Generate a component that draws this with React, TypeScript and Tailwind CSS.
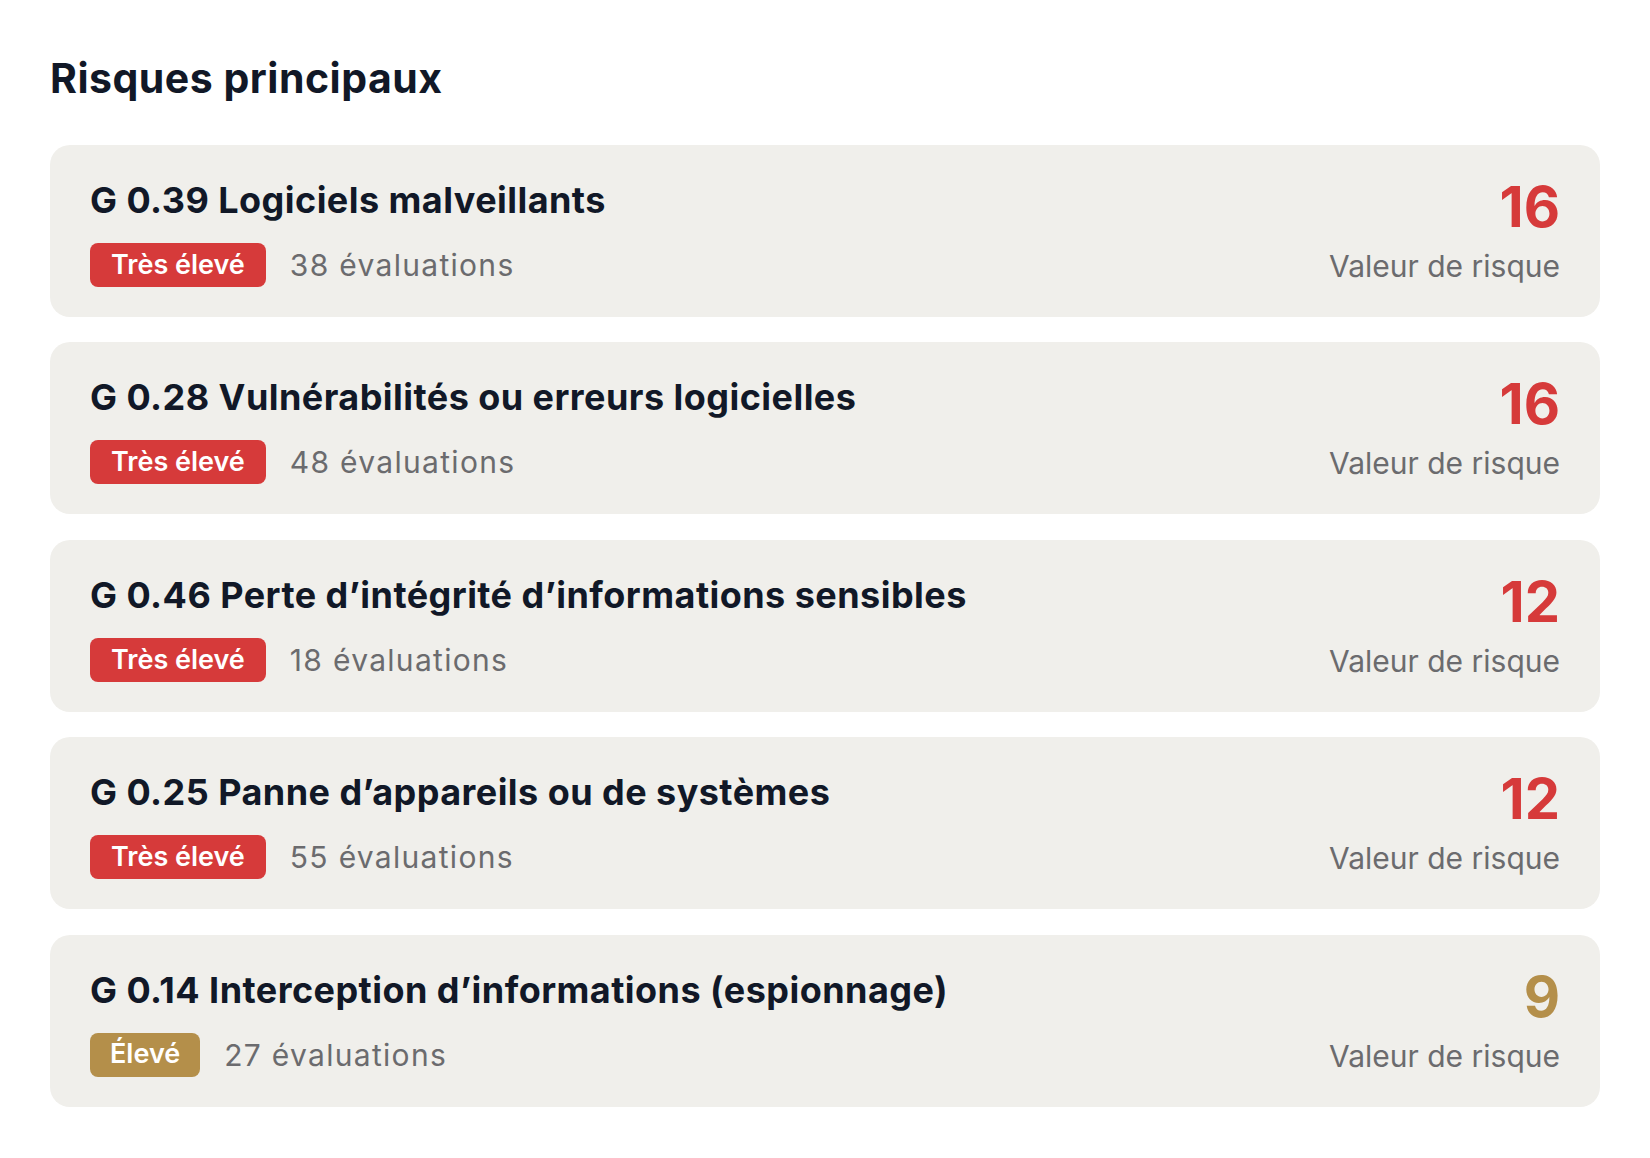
const risks = [
  { code: "G 0.39", name: "Logiciels malveillants", level: "Très élevé", count: 38, value: 16, tone: "red" },
  { code: "G 0.28", name: "Vulnérabilités ou erreurs logicielles", level: "Très élevé", count: 48, value: 16, tone: "red" },
  { code: "G 0.46", name: "Perte d’intégrité d’informations sensibles", level: "Très élevé", count: 18, value: 12, tone: "red" },
  { code: "G 0.25", name: "Panne d’appareils ou de systèmes", level: "Très élevé", count: 55, value: 12, tone: "red" },
  { code: "G 0.14", name: "Interception d’informations (espionnage)", level: "Élevé", count: 27, value: 9, tone: "gold" },
];

type Risk = (typeof risks)[number];

function RiskCard({ risk }: { risk: Risk }) {
  const red = risk.tone === "red";

  return (
    <article className="flex items-start justify-between rounded-[20px] bg-[#f0efeb] px-10 pt-[36px] pb-[30px]">
      <div className="min-w-0">
        <h3 className="text-[36px] leading-[38px] font-bold tracking-[0.45px] text-[#111827]">
          {risk.code} {risk.name}
        </h3>
        <div className="mt-[24px] flex items-center gap-6">
          <span
            className={
              red
                ? "flex h-11 items-center rounded-lg bg-[#d63a3a] px-[21px] text-[27px] font-semibold text-white"
                : "flex h-11 items-center rounded-lg bg-[#b48f4a] px-[20px] text-[27px] font-semibold text-white"
            }
          >
            {risk.level}
          </span>
          <span className="text-[30px] leading-[38px] tracking-[1.3px] text-[#6b6b6e]">{risk.count} évaluations</span>
        </div>
      </div>
      <div className="flex shrink-0 flex-col items-end pt-[3px]">
        <span
          className={
            red
              ? "text-[56px] leading-[46px] font-bold text-[#d63a3a]"
              : "text-[56px] leading-[46px] font-bold text-[#b48f4a]"
          }
        >
          {risk.value}
        </span>
        <span className="mt-[17px] text-[30px] leading-[38px] text-[#6b6b6e]">Valeur de risque</span>
      </div>
    </article>
  );
}

export default function App() {
  return (
    <main className="min-h-screen bg-white px-[50px] pt-[54px] pb-12 font-['Inter','Noto_Sans',sans-serif]">
      <h2 className="text-[41px] leading-[48px] font-bold tracking-[0.5px] text-[#111827]">Risques principaux</h2>
      <section className="mt-[43px] flex flex-col gap-[25.4px]">
        {risks.map((risk) => (
          <RiskCard key={risk.code} risk={risk} />
        ))}
      </section>
    </main>
  );
}
